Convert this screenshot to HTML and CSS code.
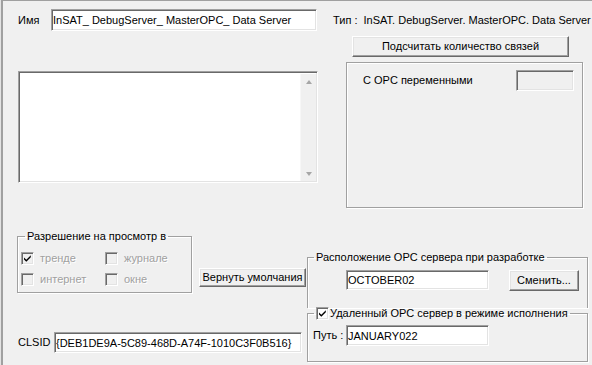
FILE: index.html
```html
<!DOCTYPE html>
<html>

<head>
    <meta charset="UTF-8">
    <title>OPC Server</title>
    <link rel="stylesheet" href="styles.css">
</head>

<body>

    <div class="window">
        <div class="top">
            <div class="col-left">
                <div class="name-row">
                    <span class="lbl name-lbl">Имя</span>
                    <input class="field name-field" type="text" value="InSAT_ DebugServer_ MasterOPC_ Data Server">
                </div>
                <div class="memo">
                    <div class="memo-text"></div>
                    <div class="vscroll">
                        <span class="arrow up"></span>
                        <span class="arrow down"></span>
                    </div>
                </div>
            </div>

            <div class="col-right">
                <div class="type-line">Тип :&nbsp; InSAT. DebugServer. MasterOPC. Data Server</div>
                <button class="btn count-btn">Подсчитать количество связей</button>
                <div class="group stats">
                    <span class="stats-lbl">С OPC переменными</span>
                    <div class="field small-field"></div>
                </div>
            </div>
        </div>

        <div class="bottom">
            <div class="bottom-left">
                <div class="view-row">
                    <fieldset class="group view-group">
                        <legend>Разрешение на просмотр в</legend>
                        <div class="checks">
                            <label class="opt disabled">
                                <span class="check off">
                                    <svg width="9" height="9" viewBox="0 0 9 9"><path d="M1 3.5 L3.3 5.8 L7.8 1.3 L7.8 3.3 L3.3 7.8 L1 5.5 Z" fill="#000"/></svg>
                                </span>тренде
                            </label>
                            <label class="opt disabled"><span class="check off"></span>журнале</label>
                            <label class="opt disabled"><span class="check off"></span>интернет</label>
                            <label class="opt disabled"><span class="check off"></span>окне</label>
                        </div>
                    </fieldset>
                    <button class="btn reset-btn">Вернуть умолчания</button>
                </div>
                <div class="clsid-row">
                    <span class="lbl clsid-lbl">CLSID :</span>
                    <input class="field clsid-field" type="text" value="{DEB1DE9A-5C89-468D-A74F-1010C3F0B516}">
                </div>
            </div>

            <div class="bottom-right">
                <fieldset class="group dev-group">
                    <legend>Расположение OPC сервера при разработке</legend>
                    <div class="dev-row">
                        <input class="field host-field" type="text" value="OCTOBER02">
                        <button class="btn change-btn">Сменить...</button>
                    </div>
                </fieldset>
                <fieldset class="group run-group">
                    <legend>
                        <span class="check">
                            <svg width="9" height="9" viewBox="0 0 9 9"><path d="M1 3.5 L3.3 5.8 L7.8 1.3 L7.8 3.3 L3.3 7.8 L1 5.5 Z" fill="#000"/></svg>
                        </span>Удаленный OPC сервер в режиме исполнения
                    </legend>
                    <div class="path-row">
                        <span class="lbl path-lbl">Путь :</span>
                        <input class="field path-field" type="text" value="JANUARY022">
                    </div>
                </fieldset>
            </div>
        </div>
    </div>

</body>

</html>
```

FILE: styles.css
```css
/* Basic Reset */
* {
    box-sizing: border-box;
    margin: 0;
    padding: 0;
}

body {
    font-family: "Liberation Sans", Arial, sans-serif;
    font-size: 11px;
    line-height: 13px;
    color: #000;
    background: #f0f0f0;
}

.window {
    width: 592px;
    height: 365px;
    padding: 9px 0 0 18px;
    background: #f0f0f0;
    box-shadow: inset 1px 0 #e3e3e3, inset 3px 0 #a0a0a0, inset 0 1px #a0a0a0;
    overflow: hidden;
}

/* sunken edit box */
.field {
    display: block;
    background: #fff;
    border: 1px solid;
    border-color: #a0a0a0 #fff #fff #a0a0a0;
    box-shadow: inset 1px 1px #696969, inset -1px -1px #e3e3e3;
    font: inherit;
    color: #000;
    padding: 0 1px;
    outline: none;
}

/* raised push button */
.btn {
    display: block;
    font: inherit;
    color: #000;
    background: #f0f0f0;
    border: 1px solid;
    border-color: #fff #696969 #696969 #fff;
    box-shadow: inset -1px -1px #a0a0a0, inset 1px 1px #e3e3e3;
    cursor: default;
}

/* etched group frame */
.group {
    border: 1px solid #a0a0a0;
    box-shadow: inset 1px 1px #fff, 1px 1px #fff;
}

fieldset.group legend {
    padding: 0 2px;
    line-height: 13px;
}

.lbl {
    flex: none;
    white-space: nowrap;
}

/* top part */
.top {
    display: grid;
    grid-template-columns: 300px 254px;
    column-gap: 15px;
}

.name-row {
    display: flex;
    align-items: center;
    height: 22px;
}

.name-lbl {
    width: 33px;
}

.name-field {
    width: 266px;
    height: 22px;
}

.memo {
    margin-top: 40px;
    height: 112px;
    display: flex;
    background: #fff;
    border: 1px solid;
    border-color: #a0a0a0 #fff #fff #a0a0a0;
    box-shadow: inset 1px 1px #696969, inset -1px -1px #e3e3e3;
    padding: 2px 1px 1px 2px;
}

.memo-text {
    flex: 1;
}

.vscroll {
    width: 16px;
    background: #f0f0f0;
    border-left: 1px solid #f7f7f7;
    display: flex;
    flex-direction: column;
    justify-content: space-between;
    align-items: center;
    padding: 6px 0 5px;
}

.arrow {
    width: 0;
    height: 0;
    border-left: 3.5px solid transparent;
    border-right: 3.5px solid transparent;
}

.arrow.up {
    border-bottom: 4px solid #a6a6a6;
}

.arrow.down {
    border-top: 4px solid #a6a6a6;
}

.type-line {
    height: 22px;
    line-height: 22px;
    white-space: nowrap;
}

.count-btn {
    margin: 5px 0 0 19px;
    width: 217px;
    height: 21px;
}

.stats {
    margin: 5px 0 0 13px;
    width: 237px;
    height: 146px;
    display: flex;
    align-items: flex-start;
    justify-content: space-between;
    padding: 7px 8px 0 16px;
}

.stats-lbl {
    line-height: 21px;
}

.small-field {
    width: 58px;
    height: 21px;
    background: #f0f0f0;
}

/* bottom part */
.bottom {
    display: flex;
    margin: 22px 0 0 -1px;
}

.bottom-left {
    width: 290px;
}

.view-row {
    display: flex;
    align-items: flex-start;
}

.view-group {
    width: 175px;
    height: 63px;
    padding: 9px 0 0 3px;
}

.view-group legend {
    margin-left: 4px;
}

.checks {
    display: grid;
    grid-template-columns: 84px auto;
    row-gap: 8px;
}

.opt {
    display: flex;
    align-items: center;
    gap: 6px;
    height: 13px;
}

.opt.disabled {
    color: #a0a0a0;
    text-shadow: 1px 1px #fff;
}

.check {
    flex: none;
    width: 13px;
    height: 13px;
    display: inline-flex;
    align-items: center;
    justify-content: center;
    background: #fff;
    border: 1px solid;
    border-color: #a0a0a0 #fff #fff #a0a0a0;
    box-shadow: inset 1px 1px #696969, inset -1px -1px #e3e3e3;
}

.check.off {
    background: #f0f0f0;
}

.reset-btn {
    margin: 38px 0 0 7px;
    width: 107px;
    height: 19px;
}

.clsid-row {
    display: flex;
    align-items: center;
    margin: 39px 0 0 1px;
}

.clsid-lbl {
    width: 36px;
}

.clsid-field {
    width: 248px;
    height: 21px;
}

.bottom-right {
    margin-top: 21px;
    width: 281px;
    display: flex;
    flex-direction: column;
}

.dev-group {
    height: 57px;
    border-bottom: none;
    padding: 5px 0 0 6px;
}

.dev-row {
    display: flex;
    align-items: center;
    height: 22px;
}

.host-field {
    margin-left: 32px;
    width: 143px;
    height: 20px;
}

.change-btn {
    margin-left: 20px;
    width: 70px;
    height: 21px;
}

.run-group {
    margin-top: -1px;
    height: 55px;
    padding: 5px 0 0 5px;
}

.run-group legend {
    display: flex;
    align-items: center;
    gap: 1px;
    margin-left: 1px;
}

.path-row {
    display: flex;
    align-items: center;
}

.path-lbl {
    width: 33px;
}

.path-field {
    width: 143px;
    height: 21px;
}
```
